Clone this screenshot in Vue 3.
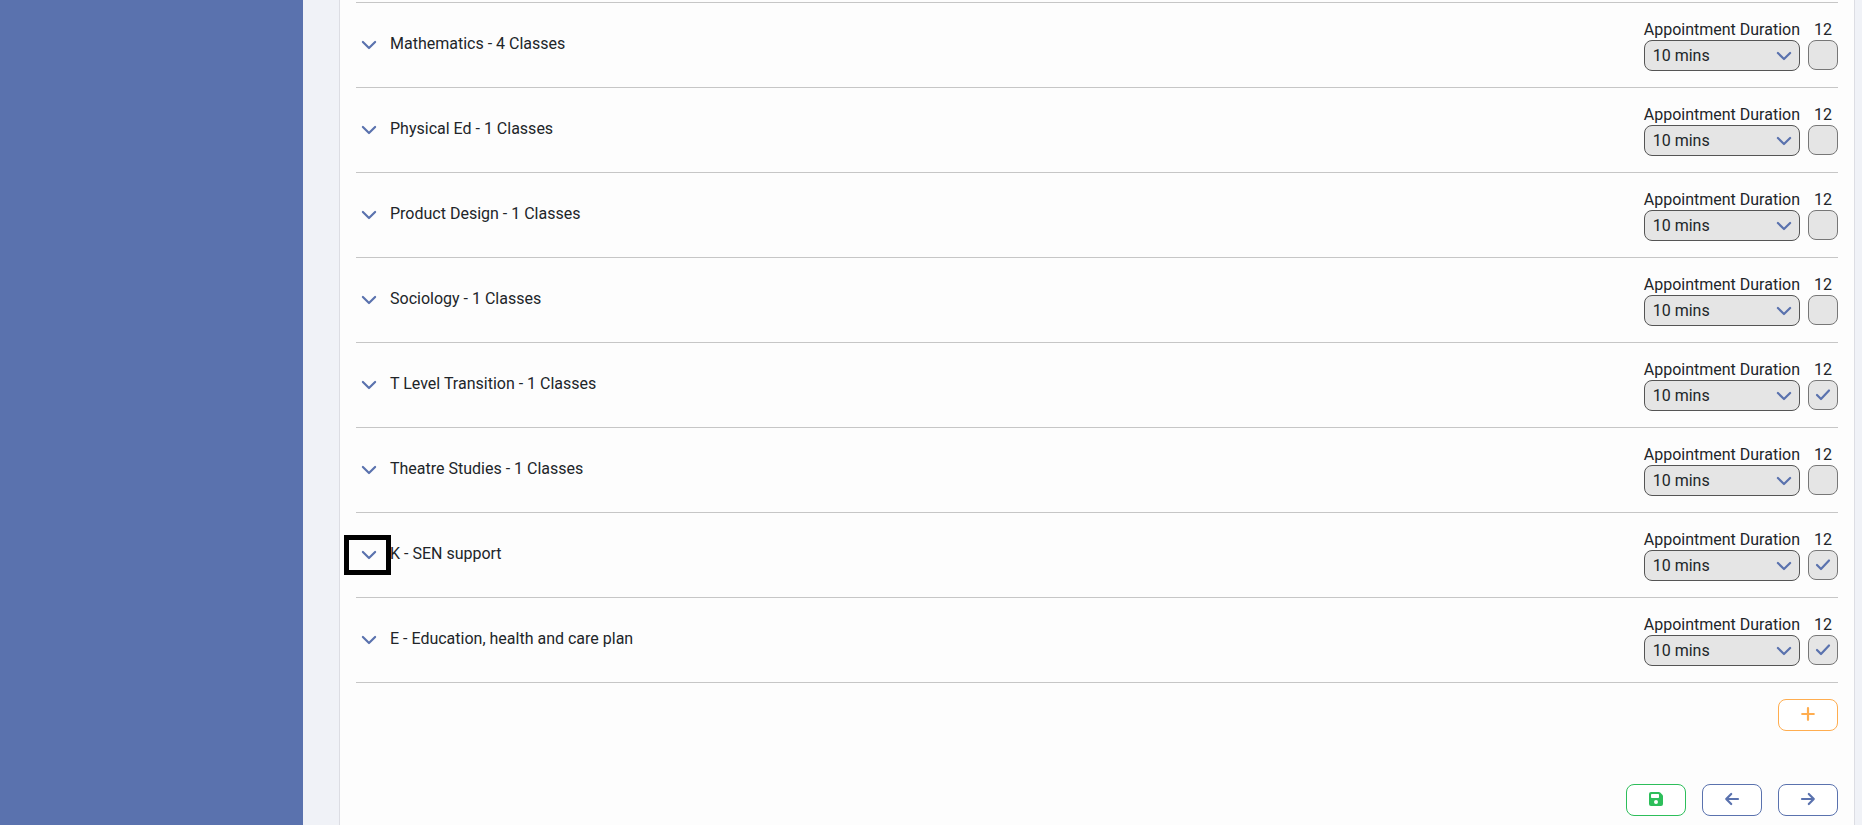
<template>
  <div class="layout">
    <aside class="sidebar"></aside>
    <main class="panel">
      <ul class="subject-list">
        <li v-for="(subject, index) in subjects" :key="subject.name" class="subject-row">
          <div class="subject-title">
            <button
              type="button"
              class="expand-btn"
              :class="{ highlighted: subject.highlighted }"
              :aria-label="'Expand ' + subject.name"
            >
              <svg width="16" height="16" viewBox="0 0 16 16">
                <path d="M1.9 5L8 11L14.1 5" />
              </svg>
            </button>
            <span class="subject-name">{{ subject.name }}</span>
          </div>

          <div class="subject-controls">
            <div class="field">
              <label :for="'duration-' + index">Appointment Duration</label>
              <div class="control">
                <select :id="'duration-' + index" v-model="subject.duration" disabled>
                  <option v-for="mins in durations" :key="mins" :value="mins">{{ mins }} mins</option>
                </select>
                <svg class="select-arrow" width="16" height="16" viewBox="0 0 16 16">
                  <path d="M1.9 5L8 11L14.1 5" />
                </svg>
              </div>
            </div>
            <div class="field">
              <label :for="'year-' + index">12</label>
              <div class="control">
                <input :id="'year-' + index" v-model="subject.checked" type="checkbox" disabled />
                <svg v-if="subject.checked" class="tick" width="16" height="16" viewBox="0 0 16 16">
                  <path d="M2 9L6 13L14 4.5" />
                </svg>
              </div>
            </div>
          </div>
        </li>
      </ul>

      <div class="actions">
        <button type="button" class="btn btn-add" aria-label="Add">
          <svg width="16" height="16" viewBox="0 0 16 16">
            <path d="M8 2.2V13.8M2.2 8H13.8" />
          </svg>
        </button>
      </div>

      <div class="actions footer">
        <button type="button" class="btn btn-save" aria-label="Save">
          <svg width="16" height="16" viewBox="0 0 16 16">
            <path
              class="solid"
              fill-rule="evenodd"
              d="M3 1H10.8Q11.6 1 12.2 1.6L14.4 3.8Q15 4.4 15 5.2V13Q15 15 13 15H3Q1 15 1 13V3Q1 1 3 1ZM3.8 3Q3 3 3 3.8V6.2Q3 7 3.8 7H10.2Q11 7 11 6.2V3.8Q11 3 10.2 3ZM8 9A2 2 0 1 0 8 13A2 2 0 1 0 8 9Z"
            />
          </svg>
        </button>
        <button type="button" class="btn btn-nav" aria-label="Previous">
          <svg width="16" height="16" viewBox="0 0 16 16">
            <path d="M14 8H2.2M7.2 3L2.2 8L7.2 13" />
          </svg>
        </button>
        <button type="button" class="btn btn-nav" aria-label="Next">
          <svg width="16" height="16" viewBox="0 0 16 16">
            <path d="M2 8H13.8M8.8 3L13.8 8L8.8 13" />
          </svg>
        </button>
      </div>
    </main>
  </div>
</template>

<script setup>
import { ref } from 'vue';

const durations = [5, 10, 15, 20];

const subjects = ref([
  { name: 'Mathematics - 4 Classes', duration: 10, checked: false },
  { name: 'Physical Ed - 1 Classes', duration: 10, checked: false },
  { name: 'Product Design - 1 Classes', duration: 10, checked: false },
  { name: 'Sociology - 1 Classes', duration: 10, checked: false },
  { name: 'T Level Transition - 1 Classes', duration: 10, checked: true },
  { name: 'Theatre Studies - 1 Classes', duration: 10, checked: false },
  { name: 'K - SEN support', duration: 10, checked: true, highlighted: true },
  { name: 'E - Education, health and care plan', duration: 10, checked: true }
]);
</script>

<style>
body {
  margin: 0;
  background: #f0f2f7;
}
</style>

<style scoped>
.layout {
  display: flex;
  min-height: 100vh;
  font-family: Roboto, "Liberation Sans", sans-serif;
  font-size: 16px;
  line-height: 21px;
  color: #212529;
}

.sidebar {
  flex: 0 0 303px;
  background: #5a72ae;
}

.panel {
  flex: 1;
  box-sizing: border-box;
  margin: 0 7px 0 36px;
  padding: 2px 16px 8px;
  background: #fdfdfd;
  border: solid #dcdde3;
  border-width: 0 1px;
}

.subject-list {
  margin: 0;
  padding: 0;
  list-style: none;
  border-top: 1px solid #c6c6c6;
}

.subject-row {
  display: flex;
  align-items: center;
  justify-content: space-between;
  padding: 16px 0;
  border-bottom: 1px solid #c6c6c6;
}

.subject-title {
  display: flex;
  align-items: center;
}

.subject-name {
  padding-bottom: 4px;
}

.expand-btn {
  position: relative;
  display: flex;
  padding: 6px 13px 6px 5px;
  background: none;
  border: none;
  cursor: pointer;
}

.expand-btn.highlighted::after {
  content: '';
  position: absolute;
  top: -6px;
  right: -1px;
  bottom: -6px;
  left: -12px;
  border: 5px solid #000;
}

.subject-controls {
  display: flex;
  gap: 8px;
}

.field {
  display: flex;
  flex-direction: column;
}

.field label {
  text-align: center;
}

.control {
  position: relative;
  display: flex;
}

select,
input {
  box-sizing: border-box;
  margin: 0;
  appearance: none;
  background: #e5e5e5;
  border: 1px solid #555;
  border-radius: 8px;
  opacity: 1;
}

select {
  width: 156px;
  height: 31px;
  padding: 0 32px 0 8px;
  font: inherit;
  color: #212529;
}

input {
  width: 30px;
  height: 30px;
  border-color: #777;
}

svg {
  display: block;
}

path {
  fill: none;
  stroke: currentColor;
  stroke-width: 2.2;
  stroke-linecap: round;
  stroke-linejoin: round;
}

path.solid {
  fill: currentColor;
  stroke: none;
}

.expand-btn,
.select-arrow,
.tick {
  color: #5a72ae;
}

.select-arrow,
.tick {
  position: absolute;
  top: 8px;
  pointer-events: none;
}

.select-arrow {
  right: 8px;
}

.tick {
  top: 6px;
  right: 7px;
}

.actions {
  display: flex;
  justify-content: flex-end;
  gap: 16px;
  margin-top: 16px;
}

.footer {
  margin-top: 53px;
}

.btn {
  box-sizing: border-box;
  display: flex;
  align-items: center;
  justify-content: center;
  width: 60px;
  height: 32px;
  padding: 0 0 2px;
  background: #fff;
  border: 1px solid currentColor;
  border-radius: 8px;
  cursor: pointer;
}

.btn-add {
  color: #ffad4f;
}

.btn-save {
  color: #2dbe5a;
}

.btn-nav {
  color: #5a72ae;
}
</style>
